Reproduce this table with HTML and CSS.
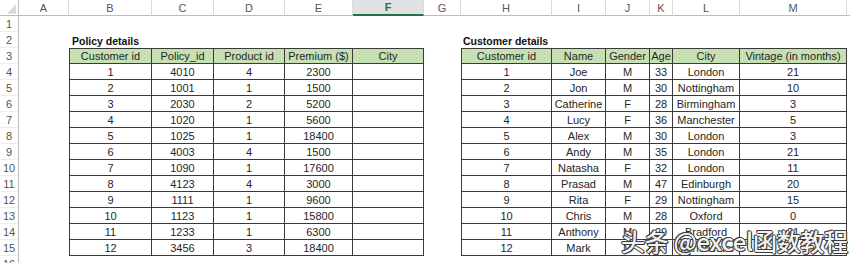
FILE: index.html
```html
<!DOCTYPE html>
<html>
<head>
<meta charset="utf-8">
<link rel="stylesheet" href="styles.css">
</head>
<body>
<div class="sheet">
  <div class="ch corner"><svg width="19" height="16" viewBox="0 0 19 16"><polygon points="17,4 17,14 7,14" fill="#dadada"/></svg></div>
  <div class="ch">A</div>
  <div class="ch">B</div>
  <div class="ch">C</div>
  <div class="ch">D</div>
  <div class="ch">E</div>
  <div class="ch sel">F</div>
  <div class="ch">G</div>
  <div class="ch">H</div>
  <div class="ch">I</div>
  <div class="ch">J</div>
  <div class="ch">K</div>
  <div class="ch">L</div>
  <div class="ch">M</div>
  <div class="ch last"></div>

  <div class="rowhdrs">
    <div class="rh">1</div><div class="rh">2</div><div class="rh">3</div><div class="rh">4</div>
    <div class="rh">5</div><div class="rh">6</div><div class="rh">7</div><div class="rh">8</div>
    <div class="rh">9</div><div class="rh">10</div><div class="rh">11</div><div class="rh">12</div>
    <div class="rh">13</div><div class="rh">14</div><div class="rh">15</div><div class="rh">16</div>
  </div>

  <div class="title t-policy">Policy details</div>
  <div class="title t-customer">Customer details</div>

  <div class="tbl policy">
    <div class="h">Customer id</div><div class="h">Policy_id</div><div class="h">Product id</div><div class="h">Premium ($)</div><div class="h">City</div>
    <div>1</div><div>4010</div><div>4</div><div>2300</div><div></div>
    <div>2</div><div>1001</div><div>1</div><div>1500</div><div></div>
    <div>3</div><div>2030</div><div>2</div><div>5200</div><div></div>
    <div>4</div><div>1020</div><div>1</div><div>5600</div><div></div>
    <div>5</div><div>1025</div><div>1</div><div>18400</div><div></div>
    <div>6</div><div>4003</div><div>4</div><div>1500</div><div></div>
    <div>7</div><div>1090</div><div>1</div><div>17600</div><div></div>
    <div>8</div><div>4123</div><div>4</div><div>3000</div><div></div>
    <div>9</div><div>1111</div><div>1</div><div>9600</div><div></div>
    <div>10</div><div>1123</div><div>1</div><div>15800</div><div></div>
    <div>11</div><div>1233</div><div>1</div><div>6300</div><div></div>
    <div>12</div><div>3456</div><div>3</div><div>18400</div><div></div>
  </div>

  <div class="tbl customer">
    <div class="h">Customer id</div><div class="h">Name</div><div class="h">Gender</div><div class="h">Age</div><div class="h">City</div><div class="h">Vintage (in months)</div>
    <div>1</div><div>Joe</div><div>M</div><div>33</div><div>London</div><div>21</div>
    <div>2</div><div>Jon</div><div>M</div><div>30</div><div>Nottingham</div><div>10</div>
    <div>3</div><div>Catherine</div><div>F</div><div>28</div><div>Birmingham</div><div>3</div>
    <div>4</div><div>Lucy</div><div>F</div><div>36</div><div>Manchester</div><div>5</div>
    <div>5</div><div>Alex</div><div>M</div><div>30</div><div>London</div><div>3</div>
    <div>6</div><div>Andy</div><div>M</div><div>35</div><div>London</div><div>21</div>
    <div>7</div><div>Natasha</div><div>F</div><div>32</div><div>London</div><div>11</div>
    <div>8</div><div>Prasad</div><div>M</div><div>47</div><div>Edinburgh</div><div>20</div>
    <div>9</div><div>Rita</div><div>F</div><div>29</div><div>Nottingham</div><div>15</div>
    <div>10</div><div>Chris</div><div>M</div><div>28</div><div>Oxford</div><div>0</div>
    <div>11</div><div>Anthony</div><div>M</div><div>29</div><div>Bradford</div><div>21</div>
    <div>12</div><div>Mark</div><div>M</div><div>30</div><div>Manchester</div><div>3</div>
  </div>
</div>
<div class="watermark">头条 @excel函数教程</div>
</body>
</html>
```
FILE: styles.css
```css
html, body {
  margin: 0;
  padding: 0;
  background: #fff;
}
body {
  width: 850px;
  height: 263px;
  overflow: hidden;
  position: relative;
  font-family: "Liberation Sans", Arial, sans-serif;
}
.sheet {
  display: grid;
  grid-template-columns: 19px 50px 83px 62px 71px 68px 71px 37px 91px 54px 44px 23px 67px 107px 1fr;
  grid-template-rows: repeat(18, 16px);
}
.ch {
  box-sizing: border-box;
  border-right: 1px solid #dadada;
  border-bottom: 1px solid #bcbcbc;
  font-size: 11px;
  color: #555;
  display: flex;
  align-items: center;
  justify-content: center;
  background: #fff;
}
.ch.corner {
  border-right-color: #bcbcbc;
  align-items: stretch;
  justify-content: stretch;
}
.ch.corner svg { display: block; }
.ch.sel {
  background: #e1e1e1;
  color: #217346;
  font-weight: bold;
  border-bottom: 2px solid #217346;
}
.ch.last { border-right: none; }
.rowhdrs {
  grid-column: 1;
  grid-row: 2 / -1;
  display: flex;
  flex-direction: column;
  border-right: 1px solid #bcbcbc;
}
.rh {
  height: 16px;
  flex: none;
  box-sizing: border-box;
  border-bottom: 1px solid #ececec;
  font-size: 11px;
  color: #555;
  display: flex;
  align-items: center;
  justify-content: center;
}
.title {
  grid-row: 3;
  font-size: 10.5px;
  font-weight: bold;
  color: #111;
  white-space: nowrap;
  display: flex;
  align-items: center;
  padding-top: 2px;
}
.t-policy {
  grid-column: 3 / span 3;
  padding-left: 3px;
}
.t-customer {
  grid-column: 9 / span 3;
  padding-left: 2px;
}
.tbl {
  display: grid;
  box-sizing: border-box;
  border-left: 1px solid #3a3a3a;
  border-top: 1px solid #3a3a3a;
  grid-row: 4 / 17;
}
.tbl > div {
  box-sizing: border-box;
  border-right: 1px solid #3a3a3a;
  border-bottom: 1px solid #3a3a3a;
  font-size: 11px;
  color: #262626;
  display: flex;
  align-items: center;
  justify-content: center;
  white-space: nowrap;
  overflow: hidden;
}
.tbl > div.h {
  background: #c6e0b4;
}
.policy {
  grid-column: 3 / 8;
  grid-template-columns: 82px 62px 71px 68px 71px;
  grid-template-rows: 15px repeat(12, 16px);
}
.customer {
  grid-column: 9 / 15;
  grid-template-columns: 90px 54px 44px 23px 67px 107px;
  grid-template-rows: 15px repeat(12, 16px);
}
.watermark {
  position: absolute;
  left: 621px;
  top: 225px;
  font-family: "Noto Sans CJK SC", "Liberation Sans", sans-serif;
  font-size: 24px;
  font-weight: 500;
  line-height: 32px;
  letter-spacing: -0.3px;
  white-space: nowrap;
  color: rgba(255, 255, 255, 0.95);
  text-shadow: 1px 0 0 #3c3c3c, -1px 0 0 #3c3c3c, 0 1px 0 #3c3c3c, 0 -1px 0 #3c3c3c, 1px 1px 0 #555, -1px -1px 0 #555;
}
```
